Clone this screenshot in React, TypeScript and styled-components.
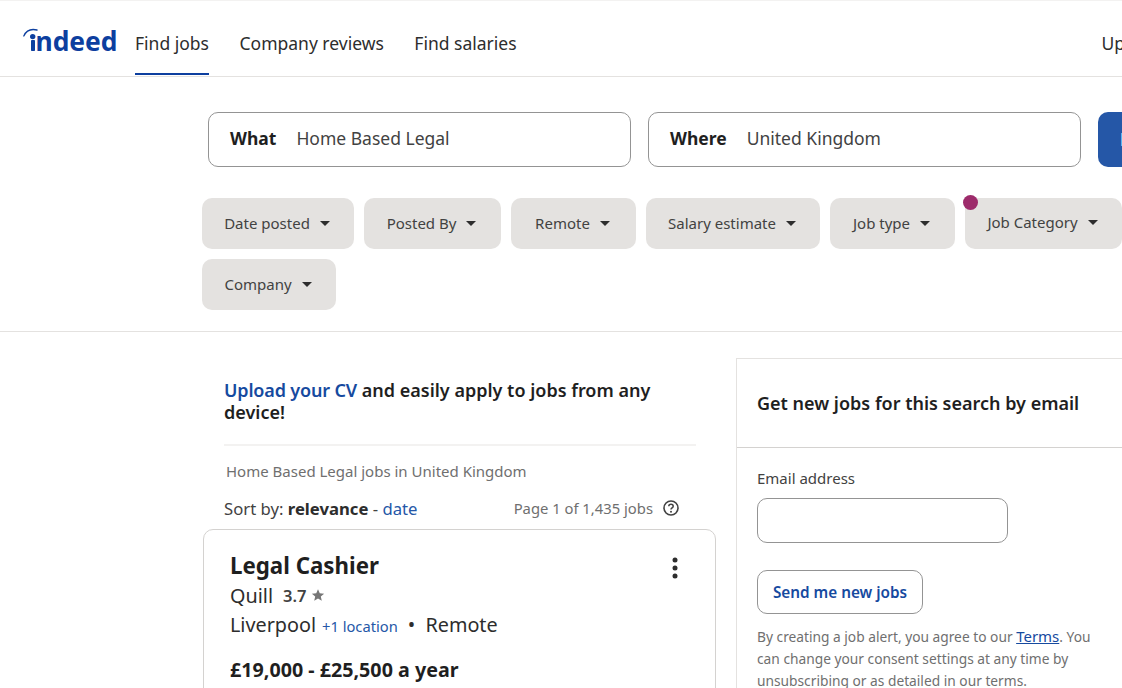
import styled, { createGlobalStyle } from 'styled-components';

const GlobalStyle = createGlobalStyle`
  html, body {
    margin: 0;
    height: 100%;
    overflow: hidden;
    background: #fff;
    font-family: "Noto Sans", "Open Sans", sans-serif;
    color: #2d2d2d;
  }
`;

const Page = styled.div`
  width: 1122px;
  height: 688px;
  overflow: hidden;
`;

const Header = styled.header`
  display: flex;
  align-items: stretch;
  height: 75px;
  padding-left: 23px;
  border-top: 1px solid #f3f2f1;
  border-bottom: 1px solid #e4e2e0;
  white-space: nowrap;
`;

const Logo = styled.svg`
  flex: none;
  width: 95px;
  height: 30px;
  margin-top: 25px;
  margin-right: 17px;
`;

const NavItem = styled.a<{ $active?: boolean }>`
  display: flex;
  flex: none;
  align-items: center;
  height: 74px;
  margin-right: 30.5px;
  padding-top: 12px;
  box-sizing: border-box;
  font-size: 17.5px;
  color: #2d2d2d;
  border-bottom: 2px solid ${({ $active }) => ($active ? '#0d3f9f' : 'transparent')};
`;

const Upload = styled(NavItem)`
  margin-left: auto;
  margin-right: -107px;
`;

const SearchSection = styled.section`
  display: flex;
  flex-direction: column;
  padding: 35px 0 21px 202px;
  border-bottom: 1px solid #e4e2e0;
`;

const SearchRow = styled.div`
  display: flex;
  gap: 17px;
  padding-left: 6px;
  margin-bottom: 31px;
`;

const Field = styled.div<{ $width: number }>`
  display: flex;
  align-items: center;
  gap: 20px;
  flex: none;
  width: ${({ $width }) => $width}px;
  height: 55px;
  padding-left: 21px;
  padding-bottom: 4px;
  box-sizing: border-box;
  border: 1px solid #949494;
  border-radius: 10px;
  font-size: 17.5px;
`;

const FieldLabel = styled.strong`
  font-weight: 700;
  color: #1f1f1f;
`;

const FieldValue = styled.span`
  color: #424242;
`;

const SearchButton = styled.button`
  flex: none;
  width: 90px;
  height: 55px;
  padding: 0 0 0 22px;
  overflow: hidden;
  border: none;
  border-radius: 10px;
  background: #2557a7;
  font-family: inherit;
  font-size: 17px;
  font-weight: 700;
  color: #fff;
  text-align: left;
  white-space: nowrap;
`;

const Filters = styled.div`
  display: flex;
  flex-wrap: wrap;
  gap: 10px;
  width: 930px;
`;

const Pill = styled.button<{ $width: number; $flagged?: boolean }>`
  position: relative;
  display: flex;
  align-items: center;
  justify-content: center;
  gap: 10px;
  flex: none;
  width: ${({ $width }) => $width}px;
  height: 51px;
  padding: 0 2px ${({ $flagged }) => ($flagged ? '4px' : '2px')} 0;
  border: none;
  border-radius: 10px;
  background: #e4e2e0;
  font-family: inherit;
  font-size: 15px;
  color: #424242;
`;

const Caret = styled.span`
  width: 0;
  height: 0;
  margin-top: 1px;
  border-left: 5px solid transparent;
  border-right: 5px solid transparent;
  border-top: 5px solid #2d2d2d;
`;

const Dot = styled.span`
  position: absolute;
  top: -3px;
  left: -2px;
  width: 15px;
  height: 15px;
  border-radius: 50%;
  background: #9d2b6b;
`;

const Content = styled.main`
  display: flex;
  align-items: flex-start;
  padding: 26px 0 0 203px;
  gap: 20px;
`;

const Column = styled.div`
  flex: none;
  width: 513px;
`;

const Banner = styled.div`
  margin: 21px 20px 0 21px;
  padding-bottom: 21px;
  border-bottom: 2px solid #f3f2f1;
  font-size: 18px;
  line-height: 22px;
  font-weight: 600;
  color: #1f1f1f;
`;

const BannerLink = styled.a`
  color: #164a9f;
  letter-spacing: -0.15px;
`;

const ResultsTitle = styled.div`
  margin: 15px 0 0 23px;
  font-size: 15px;
  line-height: 20px;
  color: #6f6f6f;
`;

const SortRow = styled.div`
  display: flex;
  align-items: center;
  justify-content: space-between;
  height: 24px;
  margin: 15px 36px 9px 21px;
`;

const Sort = styled.div`
  font-size: 16.7px;
  color: #424242;

  b {
    font-weight: 700;
    color: #2d2d2d;
  }

  a {
    color: #2557a7;
  }
`;

const Count = styled.div`
  display: flex;
  align-items: center;
  gap: 9px;
  font-size: 14.8px;
  color: #6f6f6f;
`;

const JobCard = styled.article`
  position: relative;
  height: 300px;
  padding: 21px 26px;
  box-sizing: border-box;
  border: 1px solid #d4d2d0;
  border-radius: 10px;
`;

const JobTitle = styled.h2`
  margin: 0;
  font-size: 22.3px;
  line-height: 30px;
  font-weight: 700;
  color: #1f1f1f;
`;

const Company = styled.div`
  display: flex;
  align-items: center;
  gap: 10px;
  height: 30px;
  margin-top: -1px;
  font-size: 19.8px;
  color: #2d2d2d;
`;

const Rating = styled.span`
  display: flex;
  align-items: center;
  gap: 5px;
  font-size: 16.5px;
  font-weight: 600;
  color: #424242;
`;

const Location = styled.div`
  display: flex;
  align-items: baseline;
  height: 30px;
  font-size: 19.8px;
  line-height: 30px;
  color: #2d2d2d;
`;

const MoreLocations = styled.a`
  margin: 0 10px 0 6px;
  font-size: 14.7px;
  color: #2557a7;
`;

const Salary = styled.div`
  margin-top: 15px;
  font-size: 19.7px;
  line-height: 30px;
  font-weight: 700;
  color: #1f1f1f;
`;

const MoreButton = styled.svg`
  position: absolute;
  top: 26px;
  right: 30px;
  width: 20px;
  height: 24px;
`;

const Aside = styled.aside`
  flex: none;
  width: 420px;
  height: 400px;
  border: 1px solid #e4e2e0;
  box-sizing: border-box;
`;

const AsideHead = styled.h3`
  margin: 0;
  height: 89px;
  padding-left: 20px;
  display: flex;
  align-items: center;
  box-sizing: border-box;
  border-bottom: 1px solid #d4d2d0;
  font-size: 18px;
  font-weight: 600;
  color: #1f1f1f;
`;

const AsideBody = styled.div`
  padding: 19px 20px 0;
`;

const EmailLabel = styled.label`
  display: block;
  font-size: 15px;
  line-height: 22px;
  color: #424242;
`;

const EmailInput = styled.div`
  width: 251px;
  height: 45px;
  margin-top: 9px;
  box-sizing: border-box;
  border: 1px solid #949494;
  border-radius: 10px;
`;

const SendButton = styled.button`
  display: block;
  width: 166px;
  height: 44px;
  margin-top: 27px;
  padding: 0;
  border: 1px solid #949494;
  border-radius: 10px;
  background: #fff;
  font-family: inherit;
  font-size: 15.3px;
  font-weight: 600;
  color: #164a9f;
`;

const Legal = styled.p`
  width: 345px;
  margin: 11px 0 0;
  font-size: 13.75px;
  line-height: 22px;
  color: #6f6f6f;

  a {
    color: #164a9f;
    text-decoration: underline;
    font-size: 15px;
  }
`;

const filters = [
  { label: 'Date posted', width: 152 },
  { label: 'Posted By', width: 137 },
  { label: 'Remote', width: 125 },
  { label: 'Salary estimate', width: 174 },
  { label: 'Job type', width: 125 },
  { label: 'Job Category', width: 157, flagged: true },
  { label: 'Company', width: 134 },
];

export default function App() {
  return (
    <Page>
      <GlobalStyle />
      <Header>
        <Logo viewBox="0 0 95 30">
          <path d="M0.8 10C3 5 8 2.6 14 4" fill="none" stroke="#0d3f9f" strokeWidth="1.3" strokeLinecap="round" />
          <circle cx="9.7" cy="10.6" r="2.7" fill="#0d3f9f" />
          <rect x="8" y="14" width="4" height="11" rx="0.8" fill="#0d3f9f" />
          <text x="12.5" y="25" fontFamily="'Noto Sans', sans-serif" fontSize="27" fontWeight="700" textLength="82" lengthAdjust="spacingAndGlyphs" fill="#0d3f9f">ndeed</text>
        </Logo>
        <NavItem $active>Find jobs</NavItem>
        <NavItem>Company reviews</NavItem>
        <NavItem>Find salaries</NavItem>
        <Upload>Upload your CV</Upload>
      </Header>

      <SearchSection>
        <SearchRow>
          <Field $width={423}>
            <FieldLabel>What</FieldLabel>
            <FieldValue>Home Based Legal</FieldValue>
          </Field>
          <Field $width={433}>
            <FieldLabel>Where</FieldLabel>
            <FieldValue>United Kingdom</FieldValue>
          </Field>
          <SearchButton>Find jobs</SearchButton>
        </SearchRow>
        <Filters>
          {filters.map((f) => (
            <Pill key={f.label} $width={f.width} $flagged={f.flagged}>
              {f.flagged && <Dot />}
              {f.label}
              <Caret />
            </Pill>
          ))}
        </Filters>
      </SearchSection>

      <Content>
        <Column>
          <Banner>
            <BannerLink>Upload your CV</BannerLink> and easily apply to jobs from any device!
          </Banner>
          <ResultsTitle>Home Based Legal jobs in United Kingdom</ResultsTitle>
          <SortRow>
            <Sort>
              Sort by: <b>relevance</b> - <a>date</a>
            </Sort>
            <Count>
              Page 1 of 1,435 jobs
              <svg width="18" height="18" viewBox="0 0 18 18" fill="none">
                <circle cx="9" cy="9" r="7" stroke="#424242" strokeWidth="1.6" />
                <path d="M6.8 7.2C6.8 5.9 7.8 5.2 9 5.2s2.2.8 2.2 2c0 1.7-2.2 1.7-2.2 3.4" stroke="#424242" strokeWidth="1.5" />
                <circle cx="9" cy="12.8" r="1" fill="#424242" />
              </svg>
            </Count>
          </SortRow>
          <JobCard>
            <JobTitle>Legal Cashier</JobTitle>
            <Company>
              Quill
              <Rating>
                3.7
                <svg width="14" height="14" viewBox="0 0 24 24" fill="#767676">
                  <path d="M12 2l3 7 7.5.7-5.7 5 1.7 7.3L12 18.2 5.5 22l1.7-7.3-5.7-5L9 9z" />
                </svg>
              </Rating>
            </Company>
            <Location>
              Liverpool
              <MoreLocations>+1 location</MoreLocations>
              •&nbsp;&nbsp;Remote
            </Location>
            <Salary>£19,000 - £25,500 a year</Salary>
            <MoreButton viewBox="0 0 20 24" fill="#2d2d2d">
              <circle cx="10" cy="4" r="2.5" />
              <circle cx="10" cy="12" r="2.5" />
              <circle cx="10" cy="20" r="2.5" />
            </MoreButton>
          </JobCard>
        </Column>
        <Aside>
          <AsideHead>Get new jobs for this search by email</AsideHead>
          <AsideBody>
            <EmailLabel>Email address</EmailLabel>
            <EmailInput />
            <SendButton>Send me new jobs</SendButton>
            <Legal>
              By creating a job alert, you agree to our <a>Terms</a>. You can change your consent settings at any time by unsubscribing or as detailed in our terms.
            </Legal>
          </AsideBody>
        </Aside>
      </Content>
    </Page>
  );
}
